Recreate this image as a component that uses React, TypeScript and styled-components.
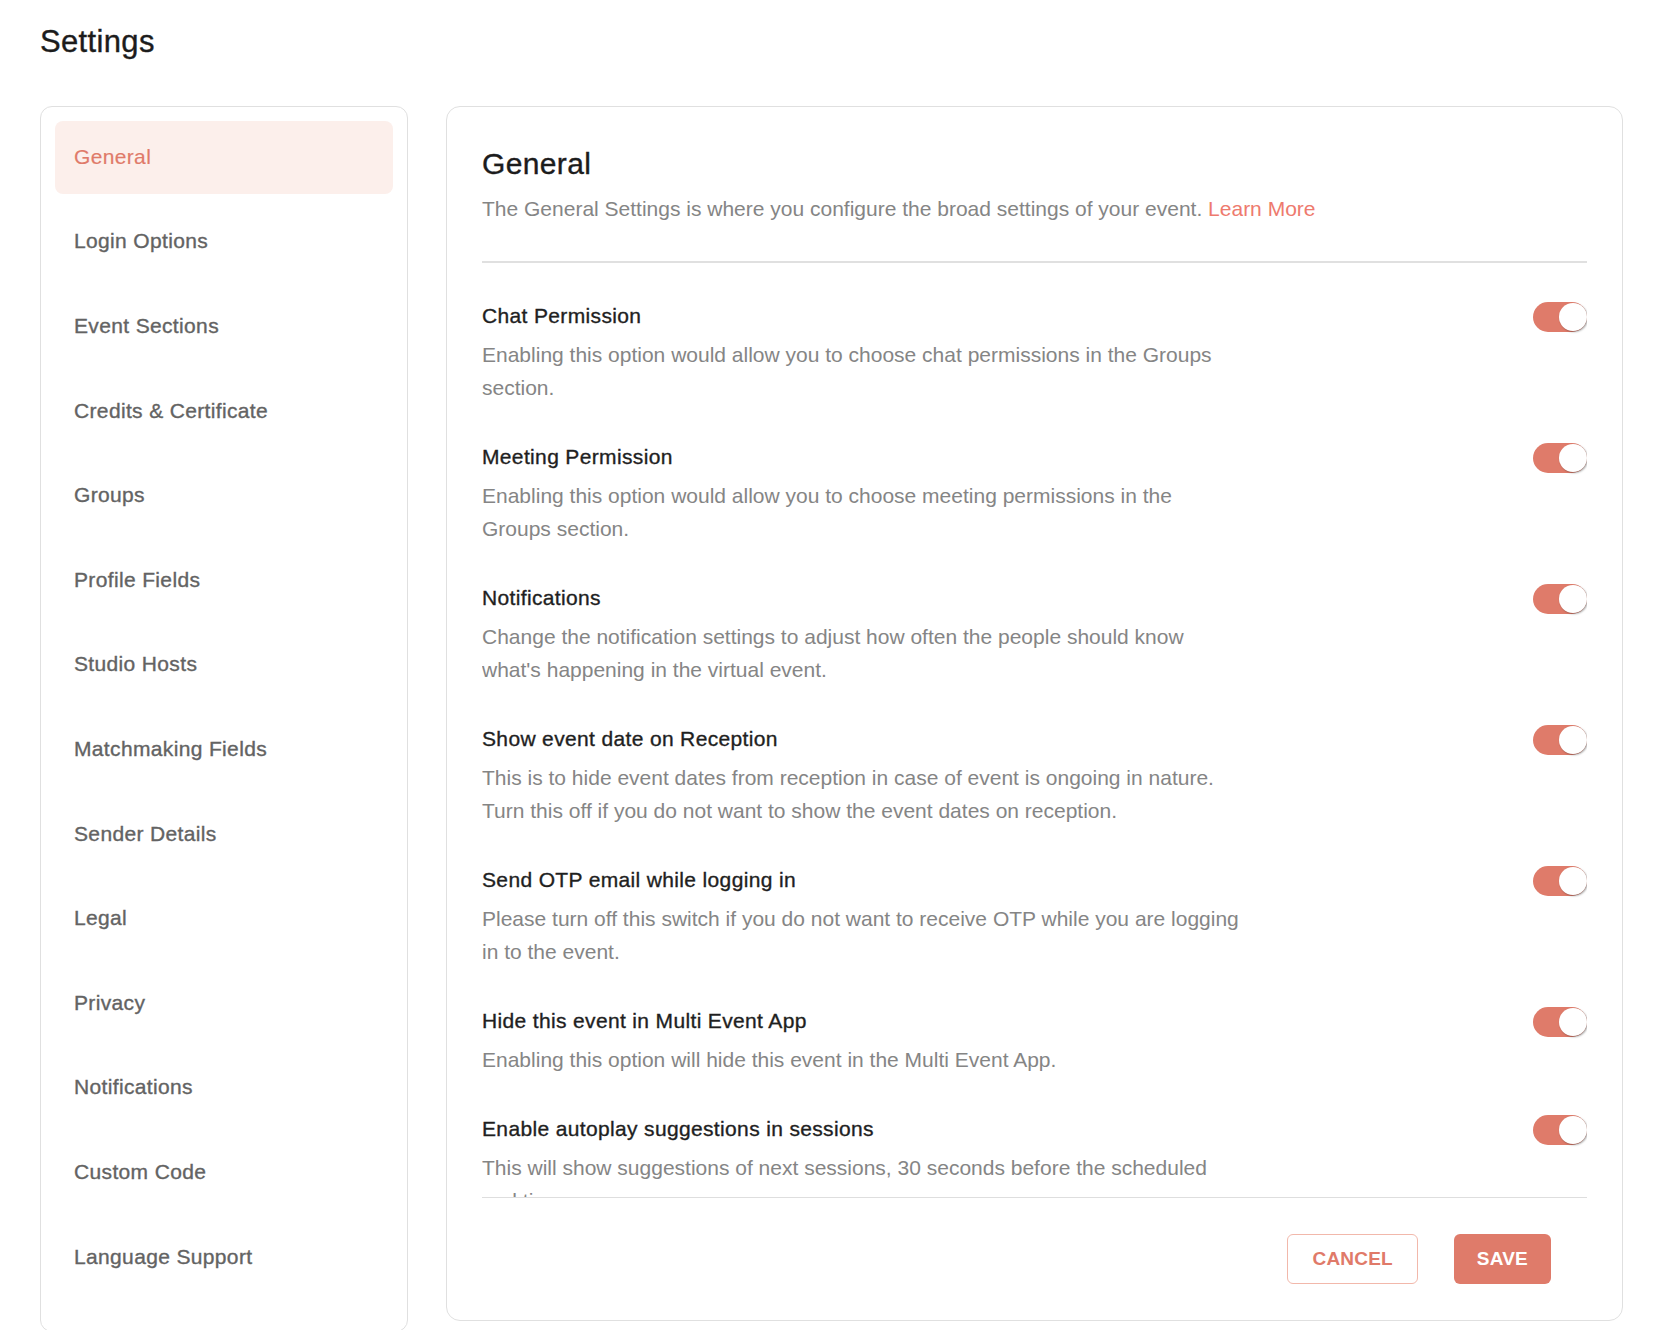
import React, { useState } from "react";
import styled, { createGlobalStyle, css } from "styled-components";

const GlobalStyle = createGlobalStyle`
  html, body {
    margin: 0;
    padding: 0;
    background: #ffffff;
  }
  body {
    font-family: "Liberation Sans", Arial, Helvetica, sans-serif;
    -webkit-font-smoothing: antialiased;
  }
  * { box-sizing: border-box; }
`;

const medium = css`
  -webkit-text-stroke: 0.35px currentColor;
  letter-spacing: 0.35px;
`;

const Page = styled.div`
  padding: 23px 41px 0 40px;
`;

const PageTitle = styled.h1`
  margin: 0 0 45px;
  font-size: 31px;
  line-height: 38px;
  font-weight: 400;
  color: #1c1c1c;
  ${medium};
`;

const Layout = styled.div`
  display: flex;
  align-items: flex-start;
  gap: 38px;
`;

const Sidebar = styled.nav`
  flex: 0 0 368px;
  display: flex;
  flex-direction: column;
  gap: 12px;
  padding: 14px 14px 38px;
  border: 1px solid #e0e0e0;
  border-radius: 12px;
`;

const NavItem = styled.a<{ $active?: boolean }>`
  display: flex;
  align-items: center;
  height: 72.6px;
  padding-left: 19px;
  padding-bottom: 1px;
  border-radius: 8px;
  font-size: 21px;
  line-height: 24px;
  color: ${(p) => (p.$active ? "#e07a69" : "#636363")};
  background: ${(p) => (p.$active ? "#fcefeb" : "transparent")};
  text-decoration: none;
  cursor: pointer;
  ${(p) => (p.$active ? "" : medium)};
  ${(p) =>
    p.$active &&
    css`
      letter-spacing: 0.35px;
      -webkit-text-stroke: 0.15px currentColor;
    `}
`;

const Panel = styled.section`
  flex: 1;
  height: 1215px;
  display: flex;
  flex-direction: column;
  padding: 39px 35px 36px;
  border: 1px solid #e0e0e0;
  border-radius: 14px;
`;

const PanelHeader = styled.header`
  border-bottom: 2px solid #e0e0e0;
  padding-bottom: 37px;
`;

const PanelTitle = styled.h2`
  margin: 0 0 12px;
  font-size: 30px;
  line-height: 36px;
  font-weight: 400;
  color: #1c1c1c;
  ${medium};
`;

const Lead = styled.p`
  margin: 0;
  font-size: 21px;
  line-height: 30px;
  color: #858585;
`;

const LearnMore = styled.a`
  color: #ee7a6e;
  text-decoration: none;
  cursor: pointer;
`;

const OptionList = styled.div`
  flex: 1;
  min-height: 0;
  overflow-y: auto;
  scrollbar-width: none;
  padding-top: 41px;
  display: flex;
  flex-direction: column;
  gap: 41px;
  &::-webkit-scrollbar { display: none; }
`;

const OptionRow = styled.div`
  display: flex;
  justify-content: space-between;
  align-items: flex-start;
  flex-shrink: 0;
`;

const OptionText = styled.div`
  display: flex;
  flex-direction: column;
  gap: 10px;
`;

const OptionTitle = styled.div`
  font-size: 21px;
  line-height: 24px;
  color: #1f1f1f;
  ${medium};
`;

const OptionDesc = styled.div`
  max-width: 760px;
  font-size: 21px;
  line-height: 33px;
  color: #858585;
`;

const Switch = styled.button<{ $on: boolean }>`
  position: relative;
  flex: 0 0 54px;
  width: 54px;
  height: 30px;
  margin-top: -2px;
  padding: 0;
  border: none;
  border-radius: 15px;
  background: ${(p) => (p.$on ? "#df7b6a" : "#cfcfcf")};
  cursor: pointer;
`;

const Knob = styled.span<{ $on: boolean }>`
  position: absolute;
  top: 1px;
  left: ${(p) => (p.$on ? "26px" : "1px")};
  width: 28px;
  height: 28px;
  border-radius: 50%;
  background: #ffffff;
  box-shadow: 1px 1px 2px rgba(0, 0, 0, 0.35);
`;

const Footer = styled.footer`
  display: flex;
  justify-content: flex-end;
  gap: 36px;
  padding: 36px 36px 0 0;
  border-top: 1px solid #dedede;
`;

const Button = styled.button<{ $primary?: boolean }>`
  height: 50px;
  padding: 0 24px;
  border-radius: 6px;
  font-family: inherit;
  font-size: 19px;
  font-weight: 700;
  letter-spacing: 0.2px;
  cursor: pointer;
  ${(p) =>
    p.$primary
      ? css`
          border: none;
          background: #df7b6a;
          color: #ffffff;
          padding: 0 23px;
        `
      : css`
          border: 1px solid #f2b8ab;
          background: #ffffff;
          color: #e07a69;
        `}
`;

const navItems = [
  "General",
  "Login Options",
  "Event Sections",
  "Credits & Certificate",
  "Groups",
  "Profile Fields",
  "Studio Hosts",
  "Matchmaking Fields",
  "Sender Details",
  "Legal",
  "Privacy",
  "Notifications",
  "Custom Code",
  "Language Support",
];

const options = [
  {
    title: "Chat Permission",
    desc: "Enabling this option would allow you to choose chat permissions in the Groups section.",
  },
  {
    title: "Meeting Permission",
    desc: "Enabling this option would allow you to choose meeting permissions in the Groups section.",
  },
  {
    title: "Notifications",
    desc: "Change the notification settings to adjust how often the people should know what's happening in the virtual event.",
  },
  {
    title: "Show event date on Reception",
    desc: "This is to hide event dates from reception in case of event is ongoing in nature. Turn this off if you do not want to show the event dates on reception.",
  },
  {
    title: "Send OTP email while logging in",
    desc: "Please turn off this switch if you do not want to receive OTP while you are logging in to the event.",
  },
  {
    title: "Hide this event in Multi Event App",
    desc: "Enabling this option will hide this event in the Multi Event App.",
  },
  {
    title: "Enable autoplay suggestions in sessions",
    desc: "This will show suggestions of next sessions, 30 seconds before the scheduled end time.",
  },
];

export default function App() {
  const [active, setActive] = useState("General");
  const [toggles, setToggles] = useState<boolean[]>(options.map(() => true));

  return (
    <Page>
      <GlobalStyle />
      <PageTitle>Settings</PageTitle>
      <Layout>
        <Sidebar>
          {navItems.map((item) => (
            <NavItem key={item} $active={item === active} onClick={() => setActive(item)}>
              {item}
            </NavItem>
          ))}
        </Sidebar>
        <Panel>
          <PanelHeader>
            <PanelTitle>General</PanelTitle>
            <Lead>
              The General Settings is where you configure the broad settings of your event.{" "}
              <LearnMore>Learn More</LearnMore>
            </Lead>
          </PanelHeader>
          <OptionList>
            {options.map((o, i) => (
              <OptionRow key={o.title}>
                <OptionText>
                  <OptionTitle>{o.title}</OptionTitle>
                  <OptionDesc>{o.desc}</OptionDesc>
                </OptionText>
                <Switch
                  $on={toggles[i]}
                  aria-pressed={toggles[i]}
                  onClick={() => setToggles((t) => t.map((v, j) => (j === i ? !v : v)))}
                >
                  <Knob $on={toggles[i]} />
                </Switch>
              </OptionRow>
            ))}
          </OptionList>
          <Footer>
            <Button>CANCEL</Button>
            <Button $primary>SAVE</Button>
          </Footer>
        </Panel>
      </Layout>
    </Page>
  );
}
